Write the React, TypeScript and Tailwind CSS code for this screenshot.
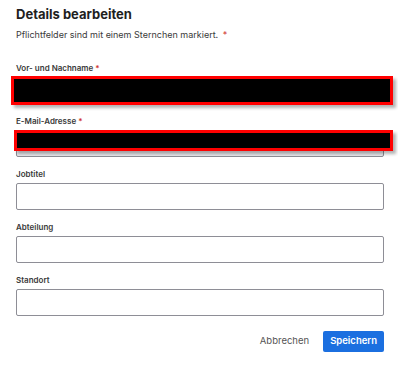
import React from "react";

function Field({
  label,
  required,
  redact,
  disabled,
}: {
  label: string;
  required?: boolean;
  redact?: "name" | "email";
  disabled?: boolean;
}) {
  return (
    <div className="flex flex-col gap-[4px]">
      <div className="text-[8px] leading-[10px] font-semibold text-[#3a3a3a]">
        {label}
        {required && <span className="text-[#d0312d] ml-[2px]">*</span>}
      </div>
      <div className="relative">
        <div
          className={`h-[27px] rounded-[2px] border border-[#8e8e96] ${
            disabled ? "bg-[#e9e9ed]" : "bg-white"
          }`}
        />
        {redact === "name" && (
          <div className="absolute left-[-5px] right-[-9px] top-[-1px] bottom-[-1px] bg-black border-[3px] border-[#ff0000] shadow-[3px_3px_3px_rgba(0,0,0,0.3)]" />
        )}
        {redact === "email" && (
          <div className="absolute left-[-2px] right-[-9px] top-0 bottom-[6px] bg-black border-[3px] border-[#ff0000] shadow-[3px_3px_3px_rgba(0,0,0,0.3)]" />
        )}
      </div>
    </div>
  );
}

export default function App() {
  return (
    <div
      className="w-[398px] h-[365px] bg-white px-[16px] pt-[5px]"
      style={{ fontFamily: "Inter, 'Noto Sans', sans-serif" }}
    >
      <h1 className="text-[13px] leading-[18px] font-bold text-[#1f1f1f]">Details bearbeiten</h1>
      <p className="mt-[6px] text-[9px] leading-[12px] text-[#3a3a3a]">
        Pflichtfelder sind mit einem Sternchen markiert.{" "}
        <span className="text-[#d0312d] ml-[2px]">*</span>
      </p>
      <div className="mt-[22px] w-[368px] flex flex-col gap-[12px]">
        <Field label="Vor- und Nachname" required redact="name" />
        <Field label="E-Mail-Adresse" required redact="email" disabled />
        <Field label="Jobtitel" />
        <Field label="Abteilung" />
        <Field label="Standort" />
      </div>
      <div className="w-[368px] mt-[15px] flex justify-end items-center gap-[14px]">
        <span className="text-[9.5px] text-[#555]">Abbrechen</span>
        <button className="h-[21px] px-[7px] rounded-[2px] bg-[#1b6fe0] text-white text-[9.5px] font-semibold">
          Speichern
        </button>
      </div>
    </div>
  );
}
